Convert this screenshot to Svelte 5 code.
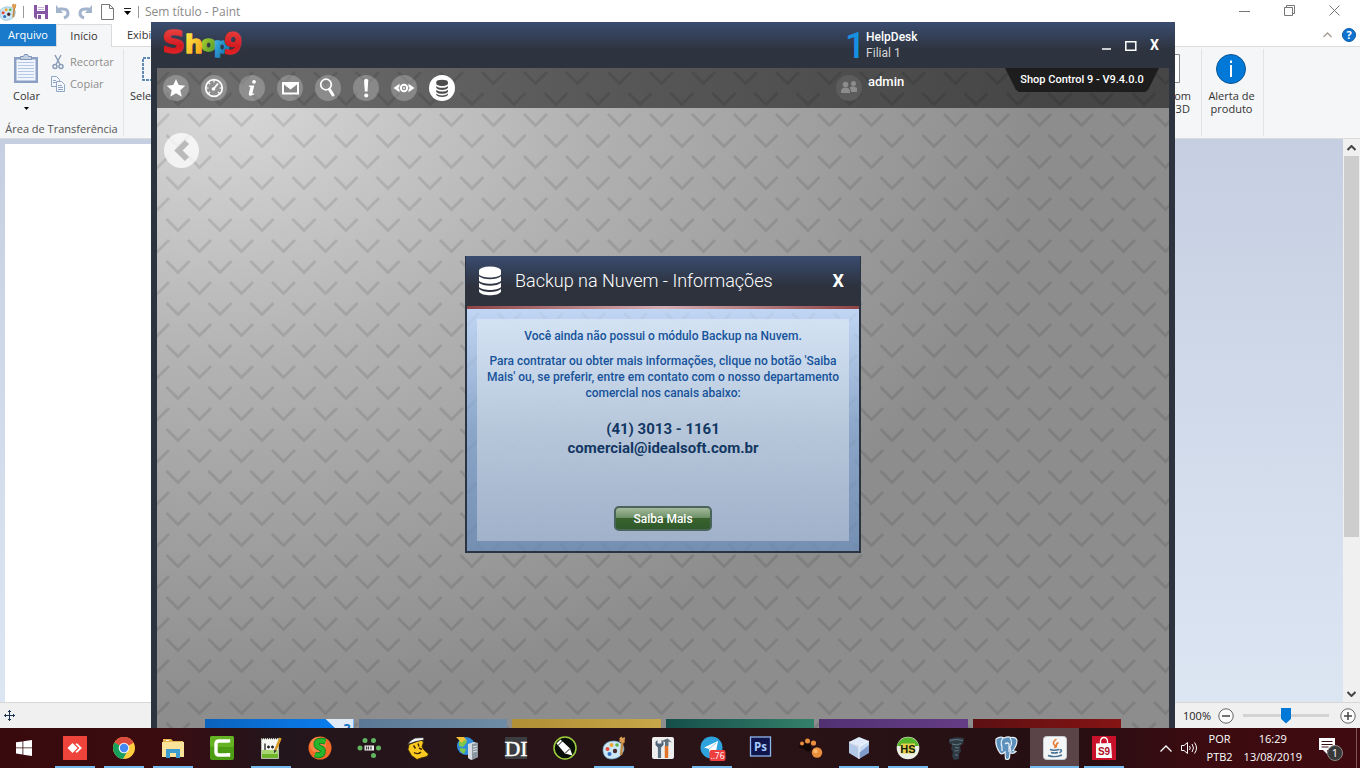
<script>
  let zoom = $state(50);

  const white = 'fill="#fff"';
  const line = 'fill="none" stroke="#fff"';

  // 26x26 glyphs of the round toolbar buttons
  const tools = [
    { name: 'Favoritos', art: `<path ${white} d="M13 4l2.7 6.1 6.6.7-5 4.4 1.5 6.5L13 18.300l-5.800 3.400 1.500-6.500-5-4.400 6.600-.7z"/>` },
    { name: 'Painel', art: `<circle cx="13" cy="13" r="8.300" ${line} stroke-width="1.700"/><path ${line} stroke-width="1.200" d="M13 5v2.500M7.500 7.500l1.500 1.500M5 13h2.500M18.500 13H21M7.500 18.500l1.500-1.500M18.500 18.500L17 17"/><path ${line} stroke-width="1.800" d="M12.500 14l4.500-5.500"/><circle cx="12.500" cy="14" r="1.800" ${white}/>` },
    { name: 'Informações', art: `<circle cx="15" cy="6.800" r="1.900" ${white}/><path ${white} d="M10 10.500h5.300l-2 8.300 2-.5-.3 1.200-3.200 1.200c-1.700.2-2.300-.7-2-2.200l1.500-6.500-1.600-.4z"/>` },
    { name: 'Mensagens', art: `<path ${white} d="M5 7h17v12.500H5z"/><path fill="#868686" d="M7 9.500l6.500 5 6.500-5v8H7z"/>` },
    { name: 'Pesquisar', art: `<circle cx="11" cy="9.500" r="5.300" ${line} stroke-width="1.700"/><path ${line} stroke-width="3" stroke-linecap="round" d="M14.500 14.500l3.500 5.500"/>` },
    { name: 'Avisos', art: `<path ${white} d="M11 5.500a2.200 2.200 0 0 1 4.300 0l-.8 11h-2.700z"/><circle cx="13.200" cy="20.500" r="2" ${white}/>` },
    { name: 'Visualizar', art: `<path ${white} d="M2.500 13l6-4.300v2.800L7.300 13l1.200 1.500v2.800zM23.500 13l-6-4.300v2.800l1.200 1.500-1.200 1.500v2.800z"/><circle cx="13" cy="13" r="3.200" ${line} stroke-width="2"/><circle cx="13" cy="13" r="1" ${white}/>` },
    { name: 'Backup', on: true, art: `<g fill="#4c4c4c"><path d="M7.300 6.900v2.300c2 2.400 9.600 2.400 11.600 0V6.900z"/><ellipse cx="13.100" cy="6.900" rx="5.800" ry="2.200"/><path d="M7.300 10.900c2 2.500 9.600 2.500 11.600 0v2.200c-2 2.500-9.600 2.500-11.600 0zM7.300 14.700c2 2.500 9.600 2.500 11.600 0v2.200c-2 2.500-9.600 2.500-11.600 0zM7.300 18.500c2 2.500 9.600 2.500 11.600 0v1.500c-2 2.500-9.600 2.500-11.600 0z"/></g>` }
  ];

  // 24x24 application icons of the taskbar
  const apps = [
    { name: 'AnyDesk', open: true, art: `<rect width="24" height="24" fill="#ef443b"/><path ${white} d="M4.500 12l5-5 5 5-5 5zM12.500 8.200L13.800 7l5.200 5-5.200 5-1.300-1.200L16.300 12z"/>` },
    { name: 'Chrome', open: true, art: `<circle cx="12" cy="12" r="11" fill="#ffcd40"/><path fill="#dd4b3e" d="M12 12L2.500 6.500A11 11 0 0 1 21.500 6.500z"/><path fill="#17a05d" d="M2.500 6.500A11 11 0 0 0 11 23l5-9z"/><path fill="#dd4b3e" d="M12 6.500h9.500L12 12z"/><circle cx="12" cy="12" r="5.300" fill="#f4f4f4"/><circle cx="12" cy="12" r="4.200" fill="#4587f3"/>` },
    { name: 'Explorador', open: true, art: `<path fill="#e8b64c" d="M2 3h8l2 2h10v4H2z"/><path fill="#fce39a" d="M1 6h22v15H1z"/><path fill="#3c9cd0" d="M5 13h14v9h-4v-5H9v5H5z"/><path fill="#fff" d="M5 4h3v1H5z"/>` },
    { name: 'Camtasia', art: `<rect width="24" height="24" rx="2" fill="#4c9c14"/><rect width="24" height="11" rx="2" fill="#65b322"/><path ${line} stroke-width="3.400" d="M18.500 6.500V5H9Q6 5 6 8v8q0 3 3 3h9.500v-2"/>` },
    { name: 'Notepad++', open: true, art: `<path fill="#f7f8f3" stroke="#b9bdb0" d="M2.500 2.500h17v20h-17z"/><path fill="#a8d673" d="M3 14h16v8H3z"/><path fill="#6fb52c" d="M3 18h16v4H3z"/><path stroke="#333" stroke-width="1.500" stroke-dasharray="1 1" d="M3 2.500h16"/><path stroke="#222" stroke-width="1.300" fill="none" d="M6 7.500v6.500M8 11h3M12 11h3M9.500 9.500v3M13.500 9.500v3"/><path stroke="#d69a28" stroke-width="2.600" d="M21.500 2l-5 12"/><path fill="#333" d="M15.200 13.500l2.500 1.200-2.700 2.500z"/>` },
    { name: 'Synergy', art: `<circle cx="12" cy="12" r="11.500" fill="#f26a26"/><circle cx="10" cy="9" r="8" fill="#ff9a58" opacity=".6"/><path fill="none" stroke="#0f7a1e" stroke-width="6" d="M17.500 5.500Q9 3 8.500 8q0 2.500 3.500 3.800Q16 13 14.500 17q-2 3.500-7.500 1.500"/><path fill="none" stroke="#27b52c" stroke-width="4.500" d="M17.500 5.500Q9 3 8.500 8q0 2.500 3.500 3.800Q16 13 14.500 17q-2 3.500-7.500 1.500"/>` },
    { name: 'IIB', art: `<g fill="#61b55e"><circle cx="8" cy="4.500" r="2.500"/><circle cx="16.500" cy="4.500" r="2.500"/><circle cx="3" cy="12" r="2.500"/><circle cx="21.500" cy="12" r="2.500"/><circle cx="16.500" cy="19.500" r="2.500"/></g><rect x="7.500" y="9.500" width="9.500" height="5" fill="#f2f2f2"/><path stroke="#444" stroke-width="1.300" d="M9.500 10.500v3M11.500 10.500v3M14 10.500v3"/>` },
    { name: 'Mascote', art: `<path fill="#fbc91f" stroke="#3a2a00" stroke-width=".8" d="M3 8.500L15 4l2.500 2-1.500 4.500 1.500 3 5 4.500-1.500 2.500-6 1.500-4 1.500-5.500-4-3.500-6z"/><path fill="#f5f5f5" stroke="#222" stroke-width=".8" d="M1.500 8.500Q4 4 9 2l8.500-.5.500 2.500-8 1.500z"/><path fill="none" stroke="#3b2a00" stroke-width="1.400" d="M7.500 9.500l2 3M12 7.500l1 3M8 16.500q4 2.500 7-.5M13 12l3 1.500"/>` },
    { name: 'Rede', art: `<circle cx="11" cy="10" r="9" fill="#2e8cdb"/><path fill="#7fc74b" d="M4 5l5-3 3 4-4 5-4-1zM5 12l6 1-2 5-4-3z"/><path fill="#f5c234" d="M1 1l8 0 3 4-3-1-2 3-3-3z"/><path fill="#d5dbe0" d="M13 8l6-2 4 1v14l-7 3-3-2z"/><path fill="#8b969e" d="M17 8l6-1v14l-6 3z"/><path stroke="#dfe6ea" d="M18 11l4-1M18 13.500l4-1M18 16l4-1"/>` },
    { name: 'DI', art: `<rect x="1" y="1" width="22" height="22" fill="#3b3d40"/><text x="12" y="19.500" text-anchor="middle" font-family="Liberation Serif, serif" font-size="22" fill="#fff" stroke="#fff" stroke-width=".4">DI</text>` },
    { name: 'Corel', art: `<circle cx="12" cy="12" r="11" fill="#080d05" stroke="#9bcf3c" stroke-width="1.500"/><path ${white} d="M3.500 7.500l4-4 9.500 9 2.500 7-7.500-2z"/><path stroke="#080d05" d="M5 9.500l4.500-4.500M12.500 17l4.500-4.500" fill="none"/>` },
    { name: 'Paint', open: true, art: `<path fill="#cbe6f5" stroke="#6ba5ca" stroke-width=".7" d="M1 14C1 7 8 4 15 5.500c7 2 8 7 6 10.500-3 6-8 7-12 7-5 0-8-4-8-9z"/><circle cx="5.500" cy="13" r="2" fill="#e64a3c"/><circle cx="9.500" cy="9" r="2" fill="#f2a531"/><circle cx="15" cy="9" r="1.800" fill="#5eb648"/><circle cx="7.500" cy="18" r="2" fill="#356ec0"/><circle cx="13" cy="15" r="2.200" fill="#4a2a30"/><path stroke="#c58b45" stroke-width="2.400" d="M20.500 5l-1.500 14"/><path fill="#dc9c52" d="M17.500 2l2-1.500 1 1.500 2.500-1-.5 6-5-1z"/>` },
    { name: 'Ferramentas', art: `<rect x="1" y="1" width="22" height="22" rx="2" fill="#eee"/><path stroke="#5b6f82" stroke-width="3.200" d="M8.500 9v13"/><path fill="#506579" d="M4.500 6l2-2v3.500h4V4l2 2v3l-2.500 2.500h-3L4.500 9z"/><path stroke="#e17328" stroke-width="3.500" d="M15.500 10v12"/><path fill="#63717c" d="M10.500 5l6-2.500 4.500 4-3.500-1v4.500h-3.500V6z"/>` },
    { name: 'Telegram', open: true, art: `<circle cx="11.500" cy="11.500" r="11" fill="#2da2dc"/><path ${white} d="M4 11.500L18 5l-2.500 13-4-3-2 2-.5-4z"/><path stroke="#9cc9e5" d="M9 13l7-6"/><rect x="9.500" y="14" width="16" height="11" rx="2" fill="#ee3e3e"/><text x="17.500" y="22.800" text-anchor="middle" font-family="Open Sans, sans-serif" font-size="8.500" fill="#fff">..76</text>` },
    { name: 'Photoshop', art: `<rect x="1.500" y="1" width="20" height="19" fill="#10164d" stroke="#90b6ef" stroke-width="1.300"/><text x="11.500" y="15" text-anchor="middle" font-family="Open Sans, sans-serif" font-weight="700" font-size="11.500" fill="#a6cbff">Ps</text>` },
    { name: 'Pegadas', art: `<path fill="#120907" d="M0 11q5-5 11-4l3 6-4 3-4-3z"/><g fill="#e98e3d"><circle cx="4" cy="7.500" r="2"/><circle cx="9.500" cy="5" r="2.500"/><circle cx="15.500" cy="7" r="2.600"/><circle cx="19" cy="16.500" r="5.200"/></g><circle cx="17.500" cy="15" r="2.200" fill="#ffb869"/>` },
    { name: 'NetBeans', open: true, art: `<path fill="#dfeafb" d="M2 6l10-5 10 4-9 6z"/><path fill="#b3c7e6" d="M2 6l10 5v12L2 17z"/><path fill="#7f9bc9" d="M12 11l10-6v12l-10 6z"/><path fill="#c6daf3" d="M12 11l10-6v4l-10 8z"/><path fill="none" stroke="#f5f9ff" d="M2 6l10 5 10-6M12 11v12"/>` },
    { name: 'HeidiSQL', open: true, art: `<circle cx="12" cy="12" r="11.300" fill="#ecefe5"/><path fill="#57b52b" d="M1 10a11.300 11.300 0 0 1 22 0z"/><path fill="#e6cf4d" d="M5 7.500h14v10H5z"/><text x="12" y="16.500" text-anchor="middle" font-family="Liberation Sans, sans-serif" font-weight="700" font-size="11" fill="#15200c">HS</text>` },
    { name: 'Utilitário', art: `<path fill="#2e3b44" d="M4 3q7-3 15-1l-1 6-3 2 1 5-2 3v5l-5 1-2-4 1-4-2-3 1-4-3-2z"/><path fill="none" stroke="#667884" stroke-width="1" d="M5 4.500q6-2 13 0M7 8q5 2 9-.5M10 11.500l4 .5M9.500 15l4-.5M10 19h3"/>` },
    { name: 'PostgreSQL', art: `<path fill="#5c91bd" stroke="#e8eff5" stroke-width="1.200" d="M2 3q4-3 8-1 4-2 7-.5 5-1 6 3 0 5-4 10l3 1q-3 3-6 1l-.5 5q-1 3-4 1.500l-.5-7q-3 3-5 1Q1 10 2 3z"/><path fill="none" stroke="#e8eff5" stroke-width="1.200" d="M9 2q-3 4-1 9v4M16 2q3 5 0 9l1 5M11 8q2-2 4 0v8"/>` },
    { name: 'Java', open: true, on: true, art: `<rect x=".5" y=".5" width="23" height="23" rx="3" fill="#f3f5f6" stroke="#c8ced2"/><path fill="none" stroke="#e9792b" stroke-width="1.500" d="M13.500 3q-5 3.500-2 6 1.500 1.500 0 3M15.500 6.500q-3 1.500-2 5"/><path fill="none" stroke="#456f92" stroke-width="1.400" d="M7 13.500q4 1.500 9 0M8 16.500q3 1 7 0M16.500 13.500q4 0 0 3.500M5 19.500q7 2.500 14-.5"/>` },
    { name: 'Shop 9', open: true, art: `<path fill="#c9122a" d="M0 0h24v24H0z"/><path fill="none" stroke="#fff" stroke-width="1.300" d="M8.500 8V5q.5-3.500 3.500-3.500t3.500 3.500v2"/><path ${white} d="M4 7.500L19 7l1 15H4z"/><text x="12" y="18.500" text-anchor="middle" font-family="Liberation Sans, sans-serif" font-weight="700" font-size="10" fill="#b10f24">S9</text>` }
  ];

  const tiles = [
    ['#0a63bd', '#0a80f5'],
    ['#5b7896', '#6f8ca6'],
    ['#b08f35', '#c6a648'],
    ['#154f4b', '#34806a'],
    ['#523173', '#653d86'],
    ['#5c1012', '#861414']
  ];
</script>

<div class="desktop">
  <section class="paint">
    <header class="titlebar">
      <svg class="palette" width="18" height="18" viewBox="0 0 24 24">{@html apps[11].art}</svg>
      <i class="bar"></i>
      <button aria-label="Salvar"><svg width="16" height="16" viewBox="0 0 16 16"><path fill="#8655a5" d="M1 1h14v14H3l-2-2z"/><path fill="#fff" d="M4 1h8v6H4zM4 10h8v5H4z"/><path fill="#8655a5" d="M5 11h3v4H5z"/><path stroke="#c9b3d8" d="M5 3.500h6M5 5.500h6"/></svg></button>
      <button aria-label="Desfazer"><svg width="16" height="16" viewBox="0 0 16 16"><path fill="none" stroke="#a3b4cd" stroke-width="3" d="M4 5h4q5 0 5 4.500 0 3-4 4.500"/><path fill="#a3b4cd" d="M1 1v8h7z"/></svg></button>
      <button aria-label="Refazer"><svg width="16" height="16" viewBox="0 0 16 16"><path fill="none" stroke="#a3b4cd" stroke-width="3" d="M12 5H8Q3 5 3 9.500q0 3 4 4.500"/><path fill="#a3b4cd" d="M15 1v8H8z"/></svg></button>
      <button aria-label="Novo"><svg width="16" height="16" viewBox="0 0 16 16"><path fill="#fff" stroke="#777" d="M2.500.5h8l4 4v11h-12zM10.500.5v4h4"/></svg></button>
      <button class="more" aria-label="Personalizar"><svg width="9" height="8" viewBox="0 0 9 8"><path d="M1 .5h7" stroke="#222"/><path d="M1 3h7L4.500 7z"/></svg></button>
      <i class="bar"></i>
      <span class="doc">Sem título - Paint</span>
      <div class="wincontrols">
        <button aria-label="Minimizar"><svg width="11" height="11" viewBox="0 0 11 11"><path stroke="#777" d="M0 6.500h11"/></svg></button>
        <button aria-label="Restaurar"><svg width="11" height="11" viewBox="0 0 11 11"><path fill="none" stroke="#777" d="M.5 2.500h8v8h-8zM2.500 2.500v-2h8v8h-2"/></svg></button>
        <button aria-label="Fechar"><svg width="11" height="11" viewBox="0 0 11 11"><path stroke="#777" d="M.5.5l10 10M10.500.5l-10 10"/></svg></button>
      </div>
    </header>

    <nav class="tabs">
      <button class="file">Arquivo</button>
      <button class="current">Início</button>
      <button>Exibir</button>
      <div class="help">
        <svg width="9" height="6" viewBox="0 0 9 6"><path fill="none" stroke="#a39a92" stroke-width="1.300" d="M.5 5l4-4 4 4"/></svg>
        <svg width="14" height="14" viewBox="0 0 14 14"><circle cx="7" cy="7" r="6.500" fill="#0d73cf" stroke="#0a5aa5"/><text x="7" y="11" text-anchor="middle" font-family="Open Sans, sans-serif" font-weight="700" font-size="11" fill="#fff">?</text></svg>
      </div>
    </nav>

    <div class="ribbon">
      <div class="group clipboard">
        <div class="tools">
          <button class="big"><svg width="26" height="30" viewBox="0 0 26 30"><path fill="#8c9fc4" d="M1 3h24v26H1z"/><path fill="#f1f6fe" d="M3.500 5.500h19v21h-19z"/><path fill="#c3cfe2" stroke="#7e93b6" d="M7.500 5.500v-3h3l1-2h3l1 2h3v3z"/><path stroke="#b4c8e6" d="M5 8.500h16M5 11.500h16M5 14.500h16M5 17.500h16M5 20.500h16M5 23.500h16"/></svg>Colar<svg class="drop" width="5" height="3" viewBox="0 0 5 3"><path d="M0 0h5L2.500 3z"/></svg></button>
          <div class="small">
            <button disabled><svg width="16" height="16" viewBox="0 0 16 16"><g fill="none" stroke="#8b9cb8" stroke-width="1.500"><path d="M5 1l5 9.500M11 1L6 10.500"/><circle cx="5" cy="12.500" r="2"/><circle cx="11" cy="12.500" r="2"/></g></svg>Recortar</button>
            <button disabled><svg width="16" height="16" viewBox="0 0 16 16"><g fill="#f4f8fe" stroke="#92a5c2"><path d="M1.500.5h5l3 3v7h-8z"/><path d="M6.500 5.500h5l3 3v7h-8z"/><path d="M3 4.500h3M3 6.500h3M8 9.500h4M8 11.500h5M8 13.500h5"/></g></svg>Copiar</button>
          </div>
        </div>
        <span class="caption">Área de Transferência</span>
      </div>
      <div class="group select">
        <button class="big"><svg width="40" height="30" viewBox="0 0 40 30"><path fill="none" stroke="#3067a5" stroke-width="1.500" stroke-dasharray="3 1" d="M3 4h34v22H3z"/></svg>Selecionar</button>
      </div>
      <div class="group edit">
        <button class="big"><svg width="30" height="30" viewBox="0 0 30 30"><path fill="#fff" stroke="#888" d="M.5.500h29v28H.5z"/></svg>Editar com<br />o Paint 3D</button>
      </div>
      <div class="group alert">
        <button class="big"><svg width="30" height="30" viewBox="0 0 30 30"><circle cx="15" cy="15" r="14.500" fill="#0078d7" stroke="#0b5596"/><path fill="#fff" d="M14 11h2v12h-2zM14 6.500h2V9h-2z"/></svg>Alerta de<br />produto</button>
      </div>
    </div>

    <div class="work">
      <div class="sheet"></div>
      <div class="scroll">
        <svg width="9" height="6" viewBox="0 0 9 6"><path fill="none" stroke="#444" stroke-width="2" d="M.5 5l4-4 4 4"/></svg>
        <div class="thumb"></div>
        <svg class="down" width="9" height="6" viewBox="0 0 9 6"><path fill="none" stroke="#444" stroke-width="2" d="M.5 1l4 4 4-4"/></svg>
      </div>
    </div>

    <footer class="status">
      <svg width="11" height="11" viewBox="0 0 11 11"><path fill="none" stroke="#1d3450" d="M5.500 0v11M0 5.500h11M4 1.500h3M4 9.500h3M1.500 4v3M9.500 4v3"/></svg>
      <label for="zoom">100%</label>
      <button aria-label="Reduzir"><svg width="16" height="16" viewBox="0 0 16 16"><circle cx="8" cy="8" r="7.200" fill="#fafafa" stroke="#666"/><path stroke="#444" stroke-width="1.500" d="M4 8h8"/></svg></button>
      <input id="zoom" type="range" bind:value={zoom} />
      <button aria-label="Ampliar"><svg width="16" height="16" viewBox="0 0 16 16"><circle cx="8" cy="8" r="7.200" fill="#fafafa" stroke="#666"/><path stroke="#444" stroke-width="1.500" d="M4 8h8M8 4v8"/></svg></button>
    </footer>
  </section>

  <section class="shop">
    <header class="shophead">
      <svg class="logo" width="84" height="36" viewBox="0 0 84 36" font-family="DejaVu Sans, sans-serif" font-weight="700">
        <defs>
          <linearGradient id="lr" x2="0" y2="1"><stop offset="0" stop-color="#f0504c" /><stop offset=".6" stop-color="#d31a20" /><stop offset="1" stop-color="#ec2a2a" /></linearGradient>
          <linearGradient id="ly" x2="1" y2="1"><stop offset="0" stop-color="#fff04a" /><stop offset="1" stop-color="#f59a12" /></linearGradient>
          <linearGradient id="lg" x2="1" y2="1"><stop offset="0" stop-color="#c1d92c" /><stop offset="1" stop-color="#3f932f" /></linearGradient>
          <linearGradient id="lb" x2="1" y2="1"><stop offset="0" stop-color="#45c1ec" /><stop offset="1" stop-color="#0c62a4" /></linearGradient>
        </defs>
        <g stroke-width="1.500" stroke-linejoin="round">
          <text x="1" y="27" font-size="32" fill="url(#lr)" stroke="url(#lr)">S</text>
          <text x="40" y="25" font-size="22" fill="url(#lg)" stroke="url(#lg)">o</text>
          <text x="24" y="27" font-size="25" fill="url(#ly)" stroke="url(#ly)">h</text>
          <text x="53" y="27" font-size="22" fill="url(#lb)" stroke="url(#lb)">p</text>
          <text x="63" y="28" font-size="30" font-family="Open Sans, sans-serif" fill="url(#lr)" stroke="url(#lr)" transform="rotate(6 73 18)">9</text>
        </g>
      </svg>
      <div class="branch">
        <b>1</b>
        <div><strong>HelpDesk</strong><span>Filial 1</span></div>
      </div>
      <div class="shopcontrols">
        <button aria-label="Minimizar"><svg width="10" height="12" viewBox="0 0 10 12"><path stroke="#fff" stroke-width="1.500" d="M0 10h9"/></svg></button>
        <button aria-label="Maximizar"><svg width="12" height="12" viewBox="0 0 12 12"><path fill="none" stroke="#fff" stroke-width="1.500" d="M.8 2.800h10v8.500H.8z"/></svg></button>
        <button>X</button>
      </div>
    </header>

    <div class="shopbody">
      <svg class="pattern" aria-hidden="true">
        <defs>
          <pattern id="vees" width="42" height="42" patternUnits="userSpaceOnUse">
            <g fill="none" stroke="#000" stroke-opacity=".1" stroke-width="3">
              <path d="M-11 4L.5 15.500 12 4M31 4l11.500 11.500L54 4M9.500 25L21 36.500 32.500 25" />
            </g>
          </pattern>
        </defs>
        <rect width="100%" height="100%" fill="url(#vees)" />
      </svg>

      <nav class="toolbar">
        {#each tools as t}
          <button class="round" class:on={t.on} aria-label={t.name}><svg width="26" height="26" viewBox="0 0 26 26">{@html t.art}</svg></button>
        {/each}
        <div class="user">
          <svg width="26" height="26" viewBox="0 0 26 26"><circle cx="13" cy="13" r="13" fill="#5c5c5c"/><g fill="#8c8c8c"><circle cx="9.500" cy="9.500" r="2.800"/><path d="M5 18q-.5-5.500 4.500-5.500T14 18z"/><circle cx="17.500" cy="8.500" r="2.500"/><path d="M13.500 12.500q4-2.500 7.500.5v4h-6q0-3-1.500-4.500z"/></g></svg>
          <span>admin</span>
        </div>
        <div class="version">Shop Control 9 - V9.4.0.0</div>
      </nav>

      <div class="content">
        <button class="back" aria-label="Voltar"><svg width="35" height="35" viewBox="0 0 35 35"><circle cx="17.500" cy="17.500" r="17.500" fill="#fff" fill-opacity=".75"/><path fill="none" stroke="#bababa" stroke-width="6" d="M23 9l-8.500 8.500L23 26"/></svg></button>

        <div class="dialog" role="dialog" aria-labelledby="dlg">
          <header>
            <svg width="24" height="30" viewBox="0 0 24 30"><g fill="#fff"><path d="M1 4.500v4c3 4 19 4 22 0v-4z"/><ellipse cx="12" cy="4.500" rx="11" ry="4"/><path d="M1 10.300c4 4 18 4 22 0v4.400c-3 4-19 4-22 0zM1 16.700c4 4 18 4 22 0v4.400c-3 4-19 4-22 0zM1 23.100c4 4 18 4 22 0v2.700c-3 4.700-19 4.700-22 0z"/></g></svg>
            <h1 id="dlg">Backup na Nuvem - Informações</h1>
            <button>X</button>
          </header>
          <div class="frame">
            <svg class="pattern" aria-hidden="true"><rect width="100%" height="100%" fill="url(#vees)" opacity=".3" /></svg>
            <div class="panel">
              <p>Você ainda não possui o módulo Backup na Nuvem.</p>
              <p>Para contratar ou obter mais informações, clique no botão 'Saiba<br />Mais' ou, se preferir, entre em contato com o nosso departamento<br />comercial nos canais abaixo:</p>
              <p class="contact">(41) 3013 - 1161<br />comercial@idealsoft.com.br</p>
              <button class="cta">Saiba Mais</button>
            </div>
          </div>
        </div>

        <div class="tiles">
          {#each tiles as [a, b], i}
            <div style="background: linear-gradient(90deg, {a}, {b})">
              {#if i === 0}<span class="fold">?</span>{/if}
            </div>
          {/each}
        </div>
      </div>
    </div>
  </section>

  <footer class="taskbar">
    <button class="start" aria-label="Iniciar"><svg width="16" height="16" viewBox="0 0 16 16"><path fill="#fff" d="M0 2.300l6.500-.9v6.100H0zM7.300 1.300L16 0v7.500H7.300zM0 8.300h6.500v6.200L0 13.600zM7.300 8.300H16V16l-8.700-1.300z"/></svg></button>
    {#each apps as a}
      <button class="app" class:open={a.open} class:on={a.on} aria-label={a.name}><svg width="24" height="24" viewBox="0 0 24 24">{@html a.art}</svg></button>
    {/each}
    <div class="tray">
      <svg width="12" height="7" viewBox="0 0 12 7"><path fill="none" stroke="#fff" stroke-width="1.300" d="M.5 6.500L6 1l5.500 5.500"/></svg>
      <svg width="17" height="14" viewBox="0 0 17 14"><g fill="none" stroke="#fff"><path d="M.5 4.500h2.500l3.500-3v11L3 9.500H.5z"/><path d="M8.500 5q1.500 2 0 4M11 3q3 4 0 8M13.500 1.500q4 5.500 0 11"/></g></svg>
      <div class="lang"><span>POR</span><span>PTB2</span></div>
      <div class="clock"><span>16:29</span><span>13/08/2019</span></div>
      <svg width="26" height="26" viewBox="0 0 26 26"><path fill="#fff" d="M1 3h16v12h-8v4l-4-4H1z"/><path stroke="#3a1014" stroke-width="1.200" d="M3.500 6.500h11M3.500 9.500h11M3.500 12h7"/><circle cx="17" cy="18" r="7.500" fill="#383838" stroke="#8a8a8a"/><text x="17" y="22" text-anchor="middle" font-family="Open Sans, sans-serif" font-size="11" fill="#fff">1</text></svg>
      <i></i>
    </div>
  </footer>
</div>

<style>
  :global(body) { margin: 0; }
  button { font: inherit; color: inherit; background: none; border: 0; padding: 0; margin: 0; }
  svg { display: block; flex: none; }
  .desktop {
    position: relative; height: 100vh; overflow: hidden;
    display: grid; grid-template-rows: minmax(0, 1fr) 40px; grid-template-columns: minmax(0, 1fr);
    font: 12px/16px "Open Sans", "Noto Sans", sans-serif;
  }

  /* Paint window */
  .paint { display: flex; flex-direction: column; background: #fff; color: #333; min-height: 0; font-size: 11px; }
  .titlebar { height: 24px; display: flex; align-items: center; gap: 6px; flex: none; }
  .palette { margin-left: -1px; }
  .bar { width: 1px; height: 12px; background: #999; }
  .titlebar > .bar:first-of-type { margin-right: 3px; }
  .doc { color: #8a8a8a; font-size: 12px; }
  .more { margin: 0 0 0 2px; }
  .wincontrols { margin-left: auto; display: flex; gap: 34px; padding-right: 20px; align-self: flex-start; padding-top: 5px; }
  .tabs { display: flex; height: 22px; flex: none; border-bottom: 1px solid #dadbdc; }
  .tabs > .file { width: 56px; background: #1979ca; color: #fff; }
  .tabs > .current { width: 56px; height: 23px; background: #f5f6f7; border: 1px solid #dadbdc; border-width: 1px 1px 0; box-sizing: border-box; }
  .tabs > button:nth-child(3) { padding: 0 15px; }
  .help { margin-left: auto; display: flex; align-items: center; gap: 10px; padding-right: 4px; }
  .ribbon { height: 92px; flex: none; display: flex; background: #f5f6f7; border-bottom: 1px solid #dadbdc; box-sizing: border-box; padding: 2px 0; }
  .group { border-right: 1px solid #e2e3e4; box-sizing: border-box; padding-top: 5px; }
  .clipboard { width: 124px; display: flex; flex-direction: column; justify-content: space-between; }
  .tools { display: flex; gap: 10px; padding-left: 13px; }
  .big { display: flex; flex-direction: column; align-items: center; line-height: 13px; gap: 5px; text-align: center; }
  .small { display: flex; flex-direction: column; gap: 6px; }
  .small button { display: flex; align-items: center; gap: 4px; color: #8d8d8d; }
  .caption { text-align: center; color: #555; line-height: 14px; }
  .select { padding-left: 6px; flex: 1; border: 0; }
  .select .big { width: 60px; align-items: flex-start; }
  .select svg { margin-left: 10px; }
  .edit .big, .alert .big { display: block; margin: 0 auto; }
  .edit svg, .alert svg { margin: 0 auto 5px; }
  .edit svg { margin-right: 11px; }
  .edit { width: 70px; padding-right: 6px; }
  .alert { width: 62px; padding-right: 2px; margin-right: 96px; }
  .work { flex: 1; min-height: 0; display: flex; justify-content: space-between; background: linear-gradient(#c5cfe1, #dce6f3); }
  .sheet { background: #fff; margin: 5px 0 0 5px; width: 80%; }
  .scroll { width: 17px; background: #f0f0f0; display: flex; flex-direction: column; align-items: center; padding: 6px 0 5px; box-sizing: border-box; }
  .thumb { width: 15px; height: 69%; margin-top: 5px; background: #cdcdcd; }
  .down { margin-top: auto; }
  .status { height: 26px; flex: none; background: #f0f0f0; border-top: 1px solid #d7d7d7; box-sizing: border-box; display: flex; align-items: center; padding: 0 4px; gap: 7px; color: #222; }
  .status label { margin-left: auto; font-size: 11px; }
  .status button:last-child { margin-left: 4px; }
  input[type="range"] { appearance: none; width: 86px; height: 16px; margin: 0 0 0 2px; background: linear-gradient(#d3d3d3, #d3d3d3) center / 100% 3px no-repeat; }
  input[type="range"]::-webkit-slider-thumb { appearance: none; width: 10px; height: 16px; background: #0078d7; clip-path: polygon(0 0, 100% 0, 100% 70%, 50% 100%, 0 70%); }

  /* Shop window */
  .shop { position: absolute; left: 151px; top: 22px; bottom: 40px; width: 1024px; display: flex; flex-direction: column; background: #2e343f; color: #fff; font-family: Roboto, sans-serif; }
  .shophead { height: 46px; flex: none; display: flex; align-items: flex-start; background: linear-gradient(#3a4c70, #2e343f 60%); padding: 4px 16px 0 10px; box-sizing: border-box; }
  .logo { overflow: visible; }
  .branch { margin-left: auto; display: flex; width: 257px; line-height: 16px; padding-top: 3px; }
  .branch b { font: 500 36px/34px Roboto, sans-serif; color: #1690e2; width: 21px; }
  .branch div { display: flex; flex-direction: column; }
  .branch strong { font-weight: 500; }
  .branch span { color: #d5d7da; }
  .shopcontrols { display: flex; gap: 13px; align-items: center; font-weight: 700; font-size: 14px; padding-top: 11px; }
  .shopbody { position: relative; flex: 1; min-height: 0; margin: 0 6px; display: flex; flex-direction: column; background: radial-gradient(ellipse 820px 620px at 60px 20px, #dadada, #b2b2b2 45%, #8d8d8d); }
  .pattern { position: absolute; inset: 0; width: 100%; height: 100%; }
  .toolbar { position: relative; height: 40px; flex: none; display: flex; align-items: center; gap: 12px; padding: 0 10px 0 6px; background: rgba(0, 0, 0, 0.5); }
  .round { border-radius: 50%; background: rgba(255, 255, 255, 0.24); }
  .round.on { background: #fff; }
  .user { margin-left: auto; display: flex; gap: 6px; width: 157px; font-weight: 500; font-size: 13px; }
  .user span { margin-top: -1px; }
  .version { align-self: flex-start; width: 154px; height: 24px; line-height: 24px; text-align: center; font-weight: 500; font-size: 11px; background: #1d1d1d; clip-path: polygon(0 0, 100% 0, 93% 90%, 91% 100%, 9% 100%, 7% 90%); }
  .content { position: relative; flex: 1; min-height: 0; display: flex; flex-direction: column; padding: 25px 7px 0; }
  .back { align-self: flex-start; }
  .dialog { align-self: center; margin-top: 88px; width: 396px; box-sizing: border-box; border: 2px solid #2b3443; border-top: 0; }
  .dialog header { height: 50px; display: flex; align-items: center; gap: 13px; padding: 0 16px 0 12px; margin: 0 -1px; background: linear-gradient(#3a4c70, #2d323d 60%); }
  h1 { margin: 0; flex: 1; font: 300 18px/24px Roboto, sans-serif; }
  .dialog header button { font-weight: 700; font-size: 18px; }
  .frame { position: relative; padding: 10px; border-top: 3px solid #9b5a5c; border-image: linear-gradient(90deg, #8f4344, #d5aeb4 50%, #8f4344) 1; background: linear-gradient(#c1d6f4, #8ba6c9 50%, #758fb3); }
  .panel { position: relative; height: 222px; box-sizing: border-box; padding: 9px 0 10px; display: flex; flex-direction: column; align-items: center; text-align: center; white-space: nowrap; background: linear-gradient(rgba(214, 229, 244, 0.85), rgba(194, 207, 223, 0.8) 50%, rgba(168, 183, 206, 0.85)); }
  .panel p { margin: 0 0 9px; color: #17539a; font: 500 12px/16px Roboto, sans-serif; }
  .panel .contact { margin-top: 10px; color: #123763; font: 700 15px/19px Roboto, sans-serif; }
  .cta { margin-top: auto; width: 98px; height: 25px; border: 2px solid #49645a; border-radius: 5px; background: linear-gradient(#a3b99c, #6f9268 45%, #39622f 50%, #305a2b); font-size: 12px; font-weight: 500; }
  .tiles { margin: auto 41px 0; height: 9px; display: grid; grid-template-columns: repeat(6, 1fr); gap: 5px; }
  .tiles div { overflow: hidden; display: flex; justify-content: flex-end; }
  .fold { width: 28px; box-sizing: border-box; padding: 2px 3px 0 0; text-align: right; color: #1672c4; font: 700 14px/16px "Open Sans", sans-serif; background: #dfeaf6; clip-path: polygon(0 0, 100% 0, 100% 100%, 34% 100%); }

  /* Taskbar */
  .taskbar { position: relative; display: flex; background: linear-gradient(90deg, #380a0e, #3a0c10 12%, #22151b 20%, #2b1417 50%, #260f13 78%, #3a0b10 88%, #400b10); color: #fff; }
  .start { width: 50px; display: flex; align-items: center; justify-content: center; padding-right: 2px; }
  .app { width: 49px; display: flex; align-items: center; justify-content: center; box-sizing: border-box; }
  .app svg { overflow: visible; }
  .app.open { background: linear-gradient(#76b9ed, #76b9ed) center bottom / 40px 2px no-repeat; }
  .app.on { background: linear-gradient(#76b9ed, #76b9ed) center bottom / 100% 2px no-repeat, #5a4448; }
  .tray { margin-left: auto; display: flex; align-items: center; gap: 9px; padding-right: 3px; font-size: 11px; line-height: 18px; }
  .lang, .clock { display: flex; flex-direction: column; align-items: center; }
  .clock { margin-left: 2px; }
  .tray > svg:last-of-type { margin-left: 7px; }
  .tray i { width: 1px; height: 40px; margin-left: 3px; background: #7a5558; }
</style>
